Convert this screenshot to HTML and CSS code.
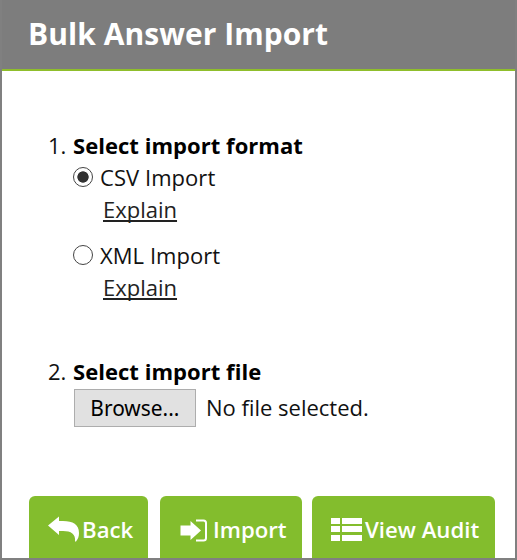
FILE: index.html
```
<!DOCTYPE html>
<html lang="en">
<head>
<meta charset="utf-8">
<title>Bulk Answer Import</title>
<link rel="stylesheet" href="styles.css">
</head>
<body>
<main class="dialog">
  <header class="header"><h1 class="title">Bulk Answer Import</h1></header>
  <form class="steps">
    <section class="step">
      <span class="num">1.</span>
      <div class="content">
        <h2 class="heading">Select import format</h2>
        <label class="option"><input class="radio" type="radio" name="format" checked><span class="label">CSV Import</span></label>
        <a class="explain" href="#">Explain</a>
        <label class="option second"><input class="radio" type="radio" name="format"><span class="label">XML Import</span></label>
        <a class="explain" href="#">Explain</a>
      </div>
    </section>
    <section class="step file-step">
      <span class="num">2.</span>
      <div class="content">
        <h2 class="heading">Select import file</h2>
        <div class="file"><button class="browse" type="button"><span class="browse-text">Browse...</span></button><span class="status">No file selected.</span></div>
      </div>
    </section>
  </form>
  <footer class="actions">
    <button class="btn back" type="button"><svg class="icon" width="32" height="28" viewBox="0 0 32 28"><path d="M0 9.500L11 0.500v4.500h4C25 5 31 8.500 31 17c0 3.500-1 6-3 8.500h-1C28 18 23 15 15 15h-4V19z"/></svg><span class="btn-text">Back</span></button>
    <button class="btn import" type="button"><svg class="icon" width="28" height="24" viewBox="0 0 28 24"><path d="M0.500 7.500h10V3l10.500 9.500L10.500 22v-4.500h-10z"/><path class="bracket" d="M16 2.500h7.500q2.500 0 2.500 2.500v15q0 2.500-2.500 2.500H16"/></svg><span class="btn-text">Import</span></button>
    <button class="btn audit" type="button"><svg class="icon" width="32" height="24" viewBox="0 0 32 24"><path d="M0 0h9v6H0zM11 0h20v6H11zM0 8h9v6H0zM11 8h20v6H11zM0 17h9v6H0zM11 17h20v6H11z"/></svg><span class="btn-text">View Audit</span></button>
  </footer>
</main>
</body>
</html>
```
FILE: styles.css
```
* { box-sizing: border-box; }
body { margin: 0; font-family: "Open Sans", sans-serif; color: #111; }
.dialog { width: 517px; height: 560px; border: 2px solid #808080; border-top-width: 0; background: #fff; overflow: hidden; display: flex; flex-direction: column; }
.header { height: 71px; flex: none; background: #7d7d7d; border-bottom: 2px solid #8fbe2b; padding: 13px 0 0 26px; }
.title { margin: 0; font-size: 30px; line-height: 41px; font-weight: 700; color: #fff; white-space: nowrap; letter-spacing: 0.050px; }
.steps { padding: 58px 0 0 46px; flex: none; }
.step { display: flex; }
.num { width: 25px; font-size: 22px; line-height: 32px; }
.heading { margin: 0; font-size: 22px; line-height: 32px; font-weight: 700; color: #000; letter-spacing: 0.040px; }
.option { display: flex; height: 32px; }
.second { margin-top: 14px; }
.radio { appearance: none; width: 20px; height: 20px; margin: 6px 7px 0 0; border: 1.5px solid #444; border-radius: 50%; }
.radio:checked { background: radial-gradient(circle, #333 5.3px, #fff 6px); }
.label { font-size: 22px; line-height: 32px; letter-spacing: 0.050px; }
.explain { display: block; width: fit-content; margin-left: 30px; font-size: 22px; line-height: 32px; color: #222; text-decoration-thickness: 1.500px; text-underline-offset: 2px; text-decoration-skip-ink: none; }
.file-step { margin-top: 52px; }
.file { display: flex; padding: 2px 0 0 1px; }
.browse { width: 122px; height: 38px; padding: 0 0 2px; border: 1px solid #adadad; background: #e1e1e1; font-family: "Noto Sans", sans-serif; font-size: 22px; line-height: 34px; color: #000; }
.browse-text { display: inline-block; transform: scaleX(0.950); }
.status { margin-left: 10px; font-size: 22px; line-height: 36px; }
.actions { display: flex; margin: 69px 0 0 27px; }
.btn { display: flex; align-items: center; height: 68px; border: 0; border-radius: 6px; background: #83bd2d; color: #fff; font-family: "Open Sans", sans-serif; font-size: 22.200px; font-weight: 600; white-space: nowrap; flex: none; }
.btn-text { padding-bottom: 2px; }
.back { width: 119px; padding: 0 0 0 19px; }
.import { width: 142px; padding: 0 0 0 20px; margin-left: 12px; }
.audit { width: 183px; padding: 0 0 0 19px; margin-left: 10px; }
.icon { flex: none; fill: #fff; }
.bracket { fill: none; stroke: #fff; stroke-width: 2; }
.import .btn-text { margin-left: 5px; }
.back .btn-text { margin-left: 2px; }
.audit .btn-text { margin-left: 2px; }
```
